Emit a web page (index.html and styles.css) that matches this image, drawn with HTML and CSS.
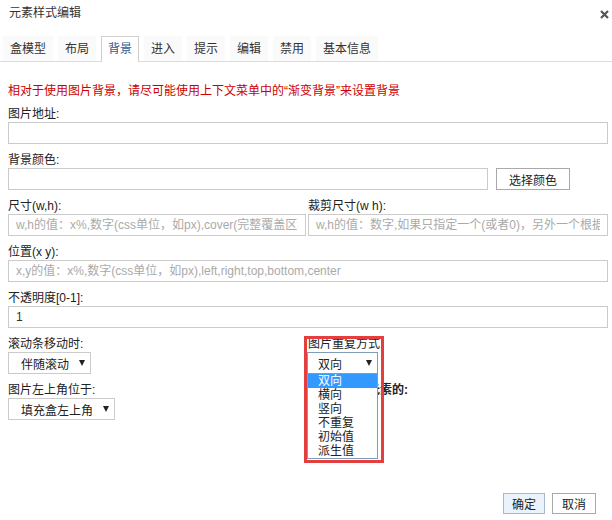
FILE: index.html
```html
<!DOCTYPE html>
<html lang="zh-CN">
<head>
    <meta charset="UTF-8">
    <meta name="viewport" content="width=device-width, initial-scale=1.0">
    <title>元素样式编辑</title>
    <link rel="stylesheet" href="styles.css">
</head>
<body>
    <div class="dialog">
        <div class="header">
            <span class="title">元素样式编辑</span>
            <span class="close">
                <svg width="9" height="9" viewBox="0 0 9 9"><path d="M1 1L8 8M8 1L1 8" stroke="#555" stroke-width="2.2"/></svg>
            </span>
        </div>
        <ul class="tabs">
            <li>盒模型</li>
            <li>布局</li>
            <li class="active">背景</li>
            <li>进入</li>
            <li>提示</li>
            <li>编辑</li>
            <li>禁用</li>
            <li>基本信息</li>
        </ul>
        <div class="content">
            <div class="note">相对于使用图片背景，请尽可能使用上下文菜单中的“渐变背景”来设置背景</div>

            <div class="field">
                <label>图片地址:</label>
                <input type="text" class="text-input">
            </div>

            <div class="field">
                <label>背景颜色:</label>
                <div class="color-row">
                    <input type="text" class="text-input">
                    <button class="btn">选择颜色</button>
                </div>
            </div>

            <div class="field-row">
                <div class="field">
                    <label>尺寸(w,h):</label>
                    <input type="text" class="text-input" placeholder="w,h的值：x%,数字(css单位，如px),cover(完整覆盖区域),contain(完整显示图片)">
                </div>
                <div class="field">
                    <label>裁剪尺寸(w h):</label>
                    <input type="text" class="text-input" placeholder="w,h的值：数字,如果只指定一个(或者0)，另外一个根据比例自动计算">
                </div>
            </div>

            <div class="field">
                <label>位置(x y):</label>
                <input type="text" class="text-input" placeholder="x,y的值：x%,数字(css单位，如px),left,right,top,bottom,center">
            </div>

            <div class="field">
                <label>不透明度[0-1]:</label>
                <input type="text" class="text-input" value="1">
            </div>

            <div class="field-row">
                <div class="field">
                    <label>滚动条移动时:</label>
                    <div class="select"><span>伴随滚动</span><i class="arrow"></i></div>
                </div>
                <div class="field repeat-pick">
                    <label>图片重复方式:</label>
                    <div class="select open"><span>双向</span><i class="arrow"></i></div>
                    <ul class="dropdown">
                        <li class="selected">双向</li>
                        <li>横向</li>
                        <li>竖向</li>
                        <li>不重复</li>
                        <li>初始值</li>
                        <li>派生值</li>
                    </ul>
                    <div class="mark"></div>
                </div>
            </div>

            <div class="field-row">
                <div class="field">
                    <label>图片左上角位于:</label>
                    <div class="select"><span>填充盒左上角</span><i class="arrow"></i></div>
                </div>
                <div class="field">
                    <label class="bold">背景绘制于元素的:</label>
                </div>
            </div>
        </div>
        <div class="footer">
            <button class="btn primary">确定</button>
            <button class="btn">取消</button>
        </div>
    </div>
</body>
</html>
```

FILE: styles.css
```css
body {
    margin: 0;
    padding: 0;
    background-color: #ffffff;
    font-family: "Liberation Sans", "Noto Sans CJK SC", sans-serif;
    font-size: 12px;
    color: #222;
}

.dialog {
    width: 612px;
    height: 520px;
    display: flex;
    flex-direction: column;
}

.header {
    height: 26px;
    line-height: 26px;
    padding: 0 3px 0 9px;
    display: flex;
    justify-content: space-between;
    align-items: center;
}

.title {
    color: #333;
}

.close {
    display: flex;
    margin-top: 2px;
}

.tabs {
    list-style: none;
    margin: 10px 0 0 0;
    padding: 0 0 0 3px;
    display: flex;
    gap: 5px;
    border-bottom: 1px solid #dcdcdc;
}

.tabs li {
    height: 24px;
    line-height: 24px;
    padding: 0 6px;
    border: 1px solid transparent;
    border-bottom: none;
    background-color: #fafafa;
    color: #333;
    margin-bottom: -1px;
}

.tabs li.active {
    background-color: #ffffff;
    border-color: #cfcfcf;
    color: #2f5a8a;
    height: 25px;
}

.content {
    padding: 21px 4px 0 8px;
}

.note {
    color: #cc0000;
    line-height: 16px;
    margin-bottom: 8px;
}

.field {
    margin-bottom: 9px;
}

.field label {
    display: block;
    line-height: 15px;
    height: 15px;
    white-space: nowrap;
}

.field label.bold {
    font-weight: bold;
}

.text-input {
    box-sizing: border-box;
    width: 100%;
    height: 22px;
    border: 1px solid #cbcbcb;
    padding: 0 7px;
    font: inherit;
    color: #333;
    outline: none;
}

.text-input::placeholder {
    color: #aaaaaa;
}

.color-row {
    display: flex;
    gap: 8px;
}

.color-row .text-input {
    width: 480px;
}

.btn {
    height: 22px;
    padding: 0 12px;
    border: 1px solid #a9a9a9;
    background-color: #ffffff;
    font: inherit;
    color: #222;
}

.color-row .btn {
    width: 74px;
}

.field-row {
    display: grid;
    grid-template-columns: 298px 1fr;
    gap: 2px;
}

.field-row .field {
    min-width: 0;
}

.select {
    box-sizing: border-box;
    display: inline-flex;
    align-items: center;
    height: 22px;
    padding: 0 5px 0 12px;
    border: 1px solid #cbcbcb;
    background-color: #ffffff;
}

.select span {
    margin-right: 10px;
}

.arrow {
    width: 0;
    height: 0;
    border-left: 3px solid transparent;
    border-right: 3px solid transparent;
    border-top: 6px solid #222;
}

.repeat-pick {
    position: relative;
}

.select.open {
    width: 71px;
    margin-left: -1px;
    padding-left: 10px;
    justify-content: space-between;
    border-color: #7f9db9;
}

.dropdown {
    position: absolute;
    top: 36px;
    left: -1px;
    width: 71px;
    box-sizing: border-box;
    margin: 0;
    padding: 0;
    list-style: none;
    border: 1px solid #7f9db9;
    background-color: #ffffff;
    z-index: 2;
}

.dropdown li {
    height: 14px;
    line-height: 14px;
    padding-left: 10px;
}

.dropdown li.selected {
    background-color: #3399ff;
    color: #ffffff;
}

.mark {
    position: absolute;
    top: -1px;
    left: -4px;
    width: 80px;
    height: 127px;
    box-sizing: border-box;
    border: 3px solid #e53e3e;
    z-index: 3;
}

.footer {
    margin-top: auto;
    padding: 0 16px 6px 0;
    display: flex;
    justify-content: flex-end;
    gap: 7px;
}

.footer .btn {
    height: 21px;
    width: 44px;
    padding: 0;
}

.footer .btn.primary {
    width: 42px;
    background-color: #eaf3fc;
    border-color: #a8b8cc;
}
```
